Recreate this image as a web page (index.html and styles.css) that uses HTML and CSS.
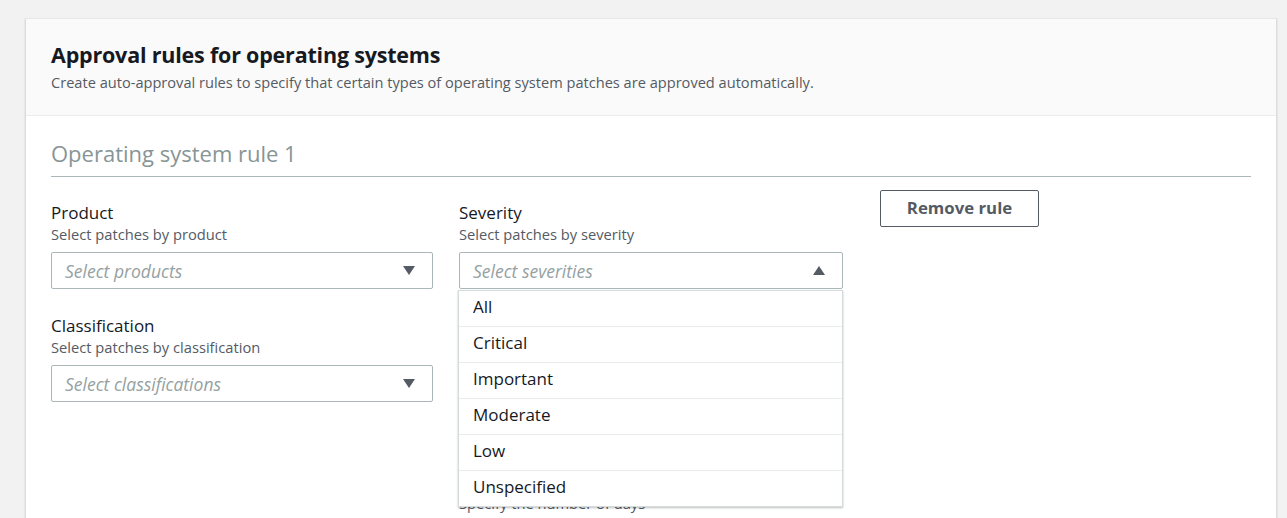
FILE: index.html
```html
<!DOCTYPE html>
<html>
<head>
<meta charset="utf-8">
<link rel="stylesheet" href="styles.css">
</head>
<body>
<div class="page">
  <div class="card">
    <div class="card-header">
      <h2 class="card-title">Approval rules for operating systems</h2>
      <p class="card-desc">Create auto-approval rules to specify that certain types of operating system patches are approved automatically.</p>
    </div>
    <div class="card-body">
      <h3 class="rule-title">Operating system rule 1</h3>
      <div class="rule-grid">
        <div class="field">
          <div class="label">Product</div>
          <div class="hint">Select patches by product</div>
          <div class="select"><span class="placeholder">Select products</span><span class="caret down"></span></div>
        </div>
        <div class="field">
          <div class="label">Severity</div>
          <div class="hint">Select patches by severity</div>
          <div class="select-wrap">
            <div class="select"><span class="placeholder">Select severities</span><span class="caret up"></span></div>
            <ul class="menu">
              <li class="option">All</li>
              <li class="option">Critical</li>
              <li class="option">Important</li>
              <li class="option">Moderate</li>
              <li class="option">Low</li>
              <li class="option">Unspecified</li>
            </ul>
          </div>
        </div>
        <div class="actions">
          <button class="btn">Remove rule</button>
        </div>
        <div class="field">
          <div class="label">Classification</div>
          <div class="hint">Select patches by classification</div>
          <div class="select"><span class="placeholder">Select classifications</span><span class="caret down"></span></div>
        </div>
        <div class="field">
          <div class="label">Compliance reporting</div>
          <div class="hint">Select a compliance level</div>
          <div class="select"><span class="placeholder">Unspecified</span><span class="caret down"></span></div>
        </div>
        <div class="spacer"></div>
        <div class="spacer"></div>
        <div class="field">
          <div class="label">Auto-approval</div>
          <div class="hint days">Specify the number of days</div>
        </div>
      </div>
    </div>
  </div>
</div>
</body>
</html>
```

FILE: styles.css
```css
* { box-sizing: border-box; }
html, body { margin: 0; padding: 0; }
body {
  background: #f2f2f2;
  font-family: "Open Sans", "Liberation Sans", Arial, sans-serif;
  color: #16191f;
  overflow: hidden;
  height: 518px;
}
.page {
  padding: 18px 10px 0 25px;
}
.card {
  background: #ffffff;
  border-left: 1px solid #dcdcdc;
  border-right: 1px solid #dcdcdc;
  border-top: 1px solid #e8e8e8;
  box-shadow: 0 1px 2px rgba(0,0,0,0.12);
  height: 520px;
}
.card-header {
  background: #fafafa;
  border-bottom: 1px solid #eaeded;
  padding: 21px 25px 0 25px;
  height: 97px;
}
.card-title {
  margin: 0;
  font-size: 21.5px;
  font-weight: 700;
  line-height: 30px;
  color: #16191f;
  letter-spacing: -0.2px;
}
.card-desc {
  margin: 0;
  font-size: 14.6px;
  line-height: 22px;
  color: #545b64;
  margin-top: 1px;
}
.card-body {
  padding: 22px 25px 0 25px;
}
.rule-title {
  margin: 0;
  font-size: 22px;
  font-weight: 400;
  color: #879596;
  line-height: 30px;
  padding-bottom: 8px;
  border-bottom: 1px solid #aab7b8;
}
.rule-grid {
  display: grid;
  grid-template-columns: 382px 384px auto;
  column-gap: 26px;
  row-gap: 14px;
  margin-top: 13px;
}
.field {
  padding-top: 12px;
}
.label {
  font-size: 17px;
  line-height: 22px;
  color: #16191f;
}
.hint {
  font-size: 14.7px;
  line-height: 20px;
  color: #545b64;
  margin-top: 0;
}
.hint.days { margin-top: 43px; }
.select {
  margin-top: 8px;
  height: 37px;
  border: 1px solid #aab7b8;
  border-radius: 2px;
  background: #fff;
  display: flex;
  align-items: center;
  justify-content: space-between;
  padding: 0 17px 0 13px;
}
.placeholder {
  font-style: italic;
  font-size: 17.5px;
  color: #95a1a2;
}
.caret {
  width: 0;
  height: 0;
  border-left: 6px solid transparent;
  border-right: 6px solid transparent;
}
.caret.down { border-top: 9px solid #545b64; }
.caret.up { border-bottom: 9px solid #545b64; }
.select-wrap {
  position: relative;
}
.menu {
  position: absolute;
  top: 38px;
  left: -1px;
  width: 385px;
  margin: 0;
  padding: 0;
  list-style: none;
  background: #fff;
  border: 1px solid #d5dbdb;
  box-shadow: 0 1px 2px rgba(0,0,0,0.25);
  z-index: 5;
}
.option {
  height: 36px;
  line-height: 32px;
  padding: 0 14px 3px;
  font-size: 17px;
  color: #16191f;
  border-top: 1px solid #eaeded;
}
.option:first-child { border-top: none; height: 35px; line-height: 31px; }
.actions {
  padding-left: 11px;
}
.btn {
  width: 159px;
  height: 37px;
  border: 1px solid #545b64;
  border-radius: 2px;
  background: #fff;
  color: #545b64;
  font-family: inherit;
  font-weight: 700;
  font-size: 16.8px;
  line-height: 33px;
  padding: 0 0 2px;
}
.spacer { height: 0; }
```
